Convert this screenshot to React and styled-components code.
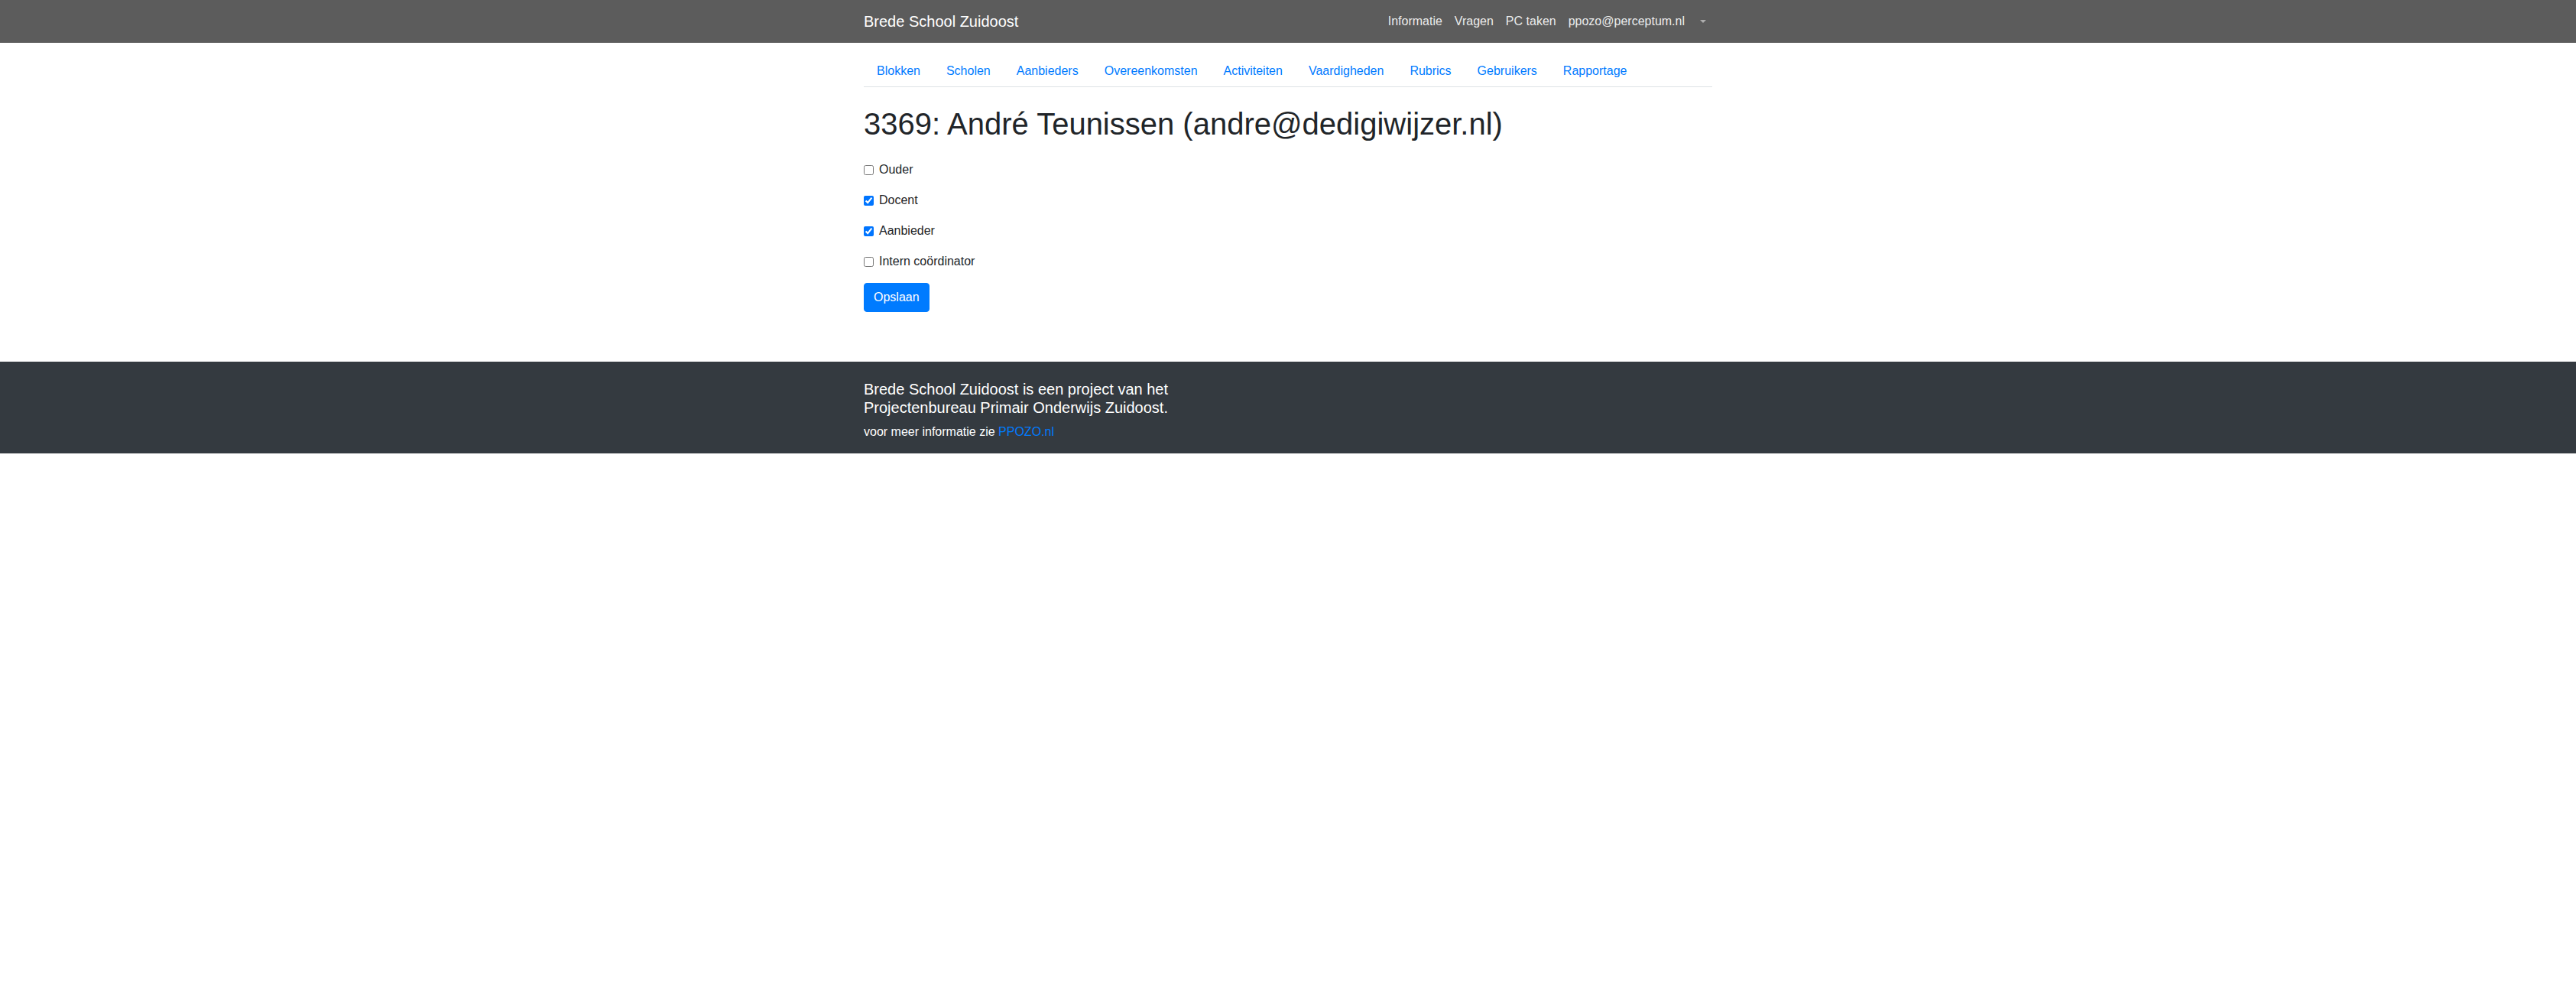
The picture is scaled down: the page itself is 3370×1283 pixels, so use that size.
import React from 'react'
import styled, { createGlobalStyle } from 'styled-components'

const GlobalStyle = createGlobalStyle`
  *, *::before, *::after {
    box-sizing: border-box;
  }

  body {
    margin: 0;
    font-family: 'Liberation Sans', Arial, sans-serif;
    font-size: 16px;
    line-height: 1.5;
    color: #212529;
    background: #fff;
  }
`

const Container = styled.div`
  width: 1140px;
  margin: 0 auto;
  padding: 0 15px;
`

const Navbar = styled.nav`
  background: #5c5c5c;
  padding: 8px 0;

  > div {
    display: flex;
    align-items: center;
    justify-content: space-between;
  }
`

const Brand = styled.a`
  font-size: 20px;
  line-height: 30px;
  padding: 5px 0;
  color: #fff;
  text-decoration: none;
`

const NavList = styled.ul`
  display: flex;
  list-style: none;
  margin: 0;
  padding: 0;
`

const NavLink = styled.a`
  display: block;
  padding: 8px;
  color: rgba(255, 255, 255, 0.9);
  text-decoration: none;
`

const Caret = styled.a`
  display: flex;
  align-items: center;
  height: 40px;
  padding: 0 8px 0 12px;

  &::after {
    content: '';
    display: block;
    border-top: 4.8px solid rgba(255, 255, 255, 0.5);
    border-left: 4.8px solid transparent;
    border-right: 4.8px solid transparent;
  }
`

const Tabs = styled.ul`
  display: flex;
  list-style: none;
  margin: 16px 0 0;
  padding: 0;
  border-bottom: 1px solid #dee2e6;
`

const TabLink = styled.a`
  display: block;
  padding: 8px 16px;
  border: 1px solid transparent;
  margin-bottom: -1px;
  color: #007bff;
  text-decoration: none;
`

const Title = styled.h1`
  font-size: 40px;
  font-weight: 500;
  line-height: 1.2;
  margin: 24px 0;
`

const Form = styled.form`
  padding-bottom: 65px;
`

const Check = styled.label`
  display: flex;
  align-items: center;
  gap: 7px;
  margin-bottom: 16px;
  line-height: 24px;

  input {
    width: 13px;
    height: 13px;
    margin: 0;
  }
`

const Button = styled.button`
  font-family: inherit;
  font-size: 16px;
  line-height: 24px;
  padding: 6px 12px;
  color: #fff;
  background: #007bff;
  border: 1px solid #007bff;
  border-radius: 4px;
  cursor: pointer;
`

const Footer = styled.footer`
  background: #343a40;
  color: #fff;
  padding: 24px 0 16px;

  h5 {
    font-size: 20px;
    font-weight: 500;
    line-height: 1.2;
    margin: 0 0 8px;
  }

  p {
    margin: 0;
  }

  a {
    color: #007bff;
    text-decoration: none;
  }
`

const tabs = ['Blokken', 'Scholen', 'Aanbieders', 'Overeenkomsten', 'Activiteiten', 'Vaardigheden', 'Rubrics', 'Gebruikers', 'Rapportage']

const roles = [
  { label: 'Ouder', checked: false },
  { label: 'Docent', checked: true },
  { label: 'Aanbieder', checked: true },
  { label: 'Intern coördinator', checked: false },
]

const App = () => {
  return (
    <>
      <GlobalStyle />
      <Navbar>
        <Container>
          <Brand href='#'>Brede School Zuidoost</Brand>
          <NavList>
            <li><NavLink href='#'>Informatie</NavLink></li>
            <li><NavLink href='#'>Vragen</NavLink></li>
            <li><NavLink href='#'>PC taken</NavLink></li>
            <li><NavLink href='#'>ppozo@perceptum.nl</NavLink></li>
            <li><Caret href='#' /></li>
          </NavList>
        </Container>
      </Navbar>
      <Container>
        <Tabs>
          {tabs.map((t) => (
            <li key={t}>
              <TabLink href='#'>{t}</TabLink>
            </li>
          ))}
        </Tabs>
        <Title>3369: André Teunissen (andre@dedigiwijzer.nl)</Title>
        <Form onSubmit={(e) => e.preventDefault()}>
          {roles.map((r) => (
            <Check key={r.label}>
              <input type='checkbox' defaultChecked={r.checked} />
              {r.label}
            </Check>
          ))}
          <Button type='submit'>Opslaan</Button>
        </Form>
      </Container>
      <Footer>
        <Container>
          <h5>
            Brede School Zuidoost is een project van het
            <br />
            Projectenbureau Primair Onderwijs Zuidoost.
          </h5>
          <p>
            voor meer informatie zie <a href='#'>PPOZO.nl</a>
          </p>
        </Container>
      </Footer>
    </>
  )
}

export default App
